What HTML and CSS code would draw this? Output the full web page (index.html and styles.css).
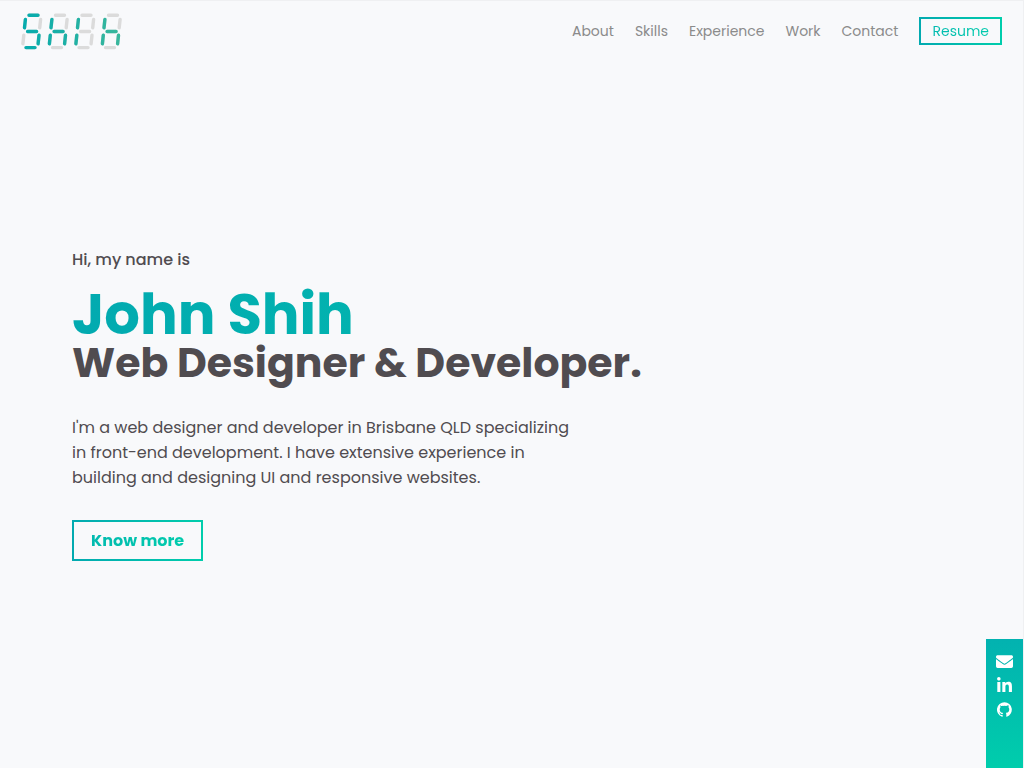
FILE: index.html
```html
<!DOCTYPE html>
<html lang="en">
<head>
<meta charset="utf-8">
<meta name="viewport" content="width=device-width, initial-scale=1">
<title>John Shih</title>
<link rel="stylesheet" href="styles.css">
</head>
<body>
<div class="page">
  <header class="header">
    <a class="logo" href="#home" aria-label="Shih">
      <svg width="101" height="37" viewBox="0 0 101 37" fill="none" stroke-width="3.4" stroke-linecap="round">
        <defs>
          <linearGradient id="logo-fill" gradientUnits="userSpaceOnUse" x1="0" y1="0" x2="101" y2="0">
            <stop offset="0" stop-color="#04abae"/>
            <stop offset="1" stop-color="#3ab79c"/>
          </linearGradient>
          <g id="digit">
            <path d="M8 2.3H17M4.4 6.4L3.5 14.8M19.6 6.4L18.7 14.8M6.6 18.5H15.6M2.8 22.2L1.9 30.8M18 22.2L17.1 30.8M5 34.6H14"/>
          </g>
        </defs>
        <g stroke="#dbdbdb">
          <use href="#digit"/><use href="#digit" x="26.5"/><use href="#digit" x="53"/><use href="#digit" x="79.5"/>
        </g>
        <g stroke="url(#logo-fill)">
          <path d="M8 2.3H17M4.4 6.4L3.5 14.8M6.6 18.5H15.6M18 22.2L17.1 30.8M5 34.6H14"/>
          <path d="M30.9 6.4L30 14.8M33.1 18.5H42.1M29.3 22.2L28.4 30.8M44.5 22.2L43.6 30.8"/>
          <path d="M57.4 6.4L56.5 14.8M55.8 22.2L54.9 30.8"/>
          <path d="M83.9 6.4L83 14.8M86.1 18.5H95.1M82.3 22.2L81.4 30.8M97.5 22.2L96.6 30.8"/>
        </g>
      </svg>
    </a>
    <nav class="nav" aria-label="Main">
      <a class="nav-link" href="#about">About</a>
      <a class="nav-link" href="#skills">Skills</a>
      <a class="nav-link" href="#experience">Experience</a>
      <a class="nav-link" href="#work">Work</a>
      <a class="nav-link" href="#contact">Contact</a>
      <a class="outline-link resume" href="#resume"><span class="gradient-text">Resume</span></a>
    </nav>
  </header>

  <main class="hero">
    <p class="greeting">Hi, my name is</p>
    <h1 class="name">John Shih</h1>
    <h2 class="role">Web Designer &amp; Developer.</h2>
    <p class="intro">I'm a web designer and developer in Brisbane QLD specializing<br>in front-end development. I have extensive experience in<br>building and designing UI and responsive websites.</p>
    <a class="outline-link more" href="#about"><span class="gradient-text">Know more</span></a>
  </main>
</div>

<aside class="social" aria-label="Social links">
  <a class="social-link" href="#email" aria-label="Email">
    <svg width="17" height="17" viewBox="0 0 512 512" fill="currentColor"><path d="M502.3 190.8c3.9-3.1 9.7-.2 9.7 4.7V400c0 26.5-21.500 48-48 48H48c-26.500 0-48-21.500-48-48V195.600c0-5 5.700-7.800 9.700-4.700 22.400 17.400 52.100 39.500 154.100 113.600 21.100 15.400 56.700 47.800 92.200 47.600 35.700.3 72-32.800 92.300-47.600 102-74.100 131.600-96.300 154-113.700zM256 320c23.200.4 56.600-29.200 73.400-41.400 132.700-96.300 142.800-104.700 173.400-128.700 5.800-4.500 9.200-11.500 9.200-18.900v-19c0-26.500-21.500-48-48-48H48c-26.500 0-48 21.500-48 48v19c0 7.400 3.400 14.300 9.200 18.900 30.600 23.900 40.700 32.400 173.400 128.700 16.800 12.200 50.200 41.800 73.400 41.400z"/></svg>
  </a>
  <a class="social-link" href="#linkedin" aria-label="LinkedIn">
    <svg width="15" height="17" viewBox="0 0 448 512" fill="currentColor"><path d="M100.3 448H7.400V148.900h92.900zM53.800 108.100C24.100 108.100 0 83.500 0 53.800a53.800 53.800 0 0 1 107.600 0c0 29.700-24.100 54.300-53.800 54.300zM447.900 448h-92.700V302.400c0-34.700-.7-79.200-48.300-79.200-48.300 0-55.700 37.700-55.700 76.700V448h-92.800V148.900h89.100v40.800h1.300c12.400-23.500 42.700-48.300 87.900-48.300 94 0 111.300 61.900 111.300 142.300V448z"/></svg>
  </a>
  <a class="social-link" href="#github" aria-label="GitHub">
    <svg width="15" height="15" viewBox="0 0 24 24" fill="currentColor"><path d="M12 .3a12 12 0 0 0-3.800 23.400c.6.1.8-.3.8-.6v-2.300c-3.300.7-4-1.400-4-1.400-.5-1.400-1.300-1.800-1.300-1.800-1.100-.7.1-.7.1-.7 1.200.1 1.800 1.200 1.800 1.200 1.100 1.900 2.900 1.300 3.500 1 .1-.8.4-1.300.8-1.600-2.700-.3-5.500-1.300-5.500-5.900 0-1.300.5-2.400 1.200-3.200-.1-.3-.5-1.500.1-3.200 0 0 1-.3 3.300 1.200a11.500 11.500 0 0 1 6 0c2.300-1.500 3.300-1.200 3.300-1.200.7 1.700.2 2.900.1 3.200.8.8 1.200 1.900 1.200 3.200 0 4.600-2.800 5.600-5.500 5.900.4.400.8 1.100.8 2.200v3.300c0 .3.200.7.8.6A12 12 0 0 0 12 .3"/></svg>
  </a>
</aside>
</body>
</html>
```

FILE: styles.css
```css
* {
  box-sizing: border-box;
}

body {
  margin: 0;
  background: #f8f9fb;
  color: #504c50;
  font-family: Poppins, Inter, "Open Sans", sans-serif;
}

a {
  color: inherit;
  text-decoration: none;
}

.page {
  display: flex;
  flex-direction: column;
  min-height: 100vh;
  border-top: 1px solid #eff0f2;
  border-right: 1px solid #eff0f2;
}

.header {
  display: flex;
  align-items: center;
  justify-content: space-between;
  padding: 12px 21px;
}

.logo svg {
  display: block;
}

.nav {
  display: flex;
  align-items: center;
  gap: 21px;
  padding-bottom: 2px;
  color: #8b8b8b;
  font-size: 14px;
  font-weight: 400;
  line-height: 24px;
}

.outline-link {
  border: 2px solid;
  border-image: linear-gradient(90deg, #02aab0, #00cdac) 1;
}

.gradient-text {
  background: linear-gradient(135deg, #02b8b0, #00cdac);
  background-clip: text;
  color: transparent;
}

.resume {
  padding: 0 11px;
}

.hero {
  display: flex;
  flex: 1;
  flex-direction: column;
  align-items: flex-start;
  justify-content: center;
  padding: 0 72px 22px;
}

.greeting {
  margin: 0 0 16px;
  font-size: 16px;
  font-weight: 500;
  line-height: 24px;
}

.name {
  margin: 0;
  background: linear-gradient(90deg, #02aab0, #01c3ad);
  background-clip: text;
  color: transparent;
  font-size: 56px;
  font-weight: 700;
  line-height: 54px;
  align-self: stretch;
}

.role {
  margin: 0 0 31px;
  font-size: 41px;
  font-weight: 700;
  line-height: 42px;
}

.intro {
  margin: 0 0 30px;
  font-size: 16px;
  font-weight: 400;
  line-height: 25px;
}

.more {
  padding: 6px 17px;
  font-size: 16px;
  font-weight: 700;
  line-height: 25px;
}

.social {
  position: fixed;
  right: 1px;
  bottom: 0;
  display: flex;
  flex-direction: column;
  align-items: center;
  gap: 7px;
  width: 37px;
  height: 129px;
  padding-top: 14px;
  background: linear-gradient(180deg, #02b2b0, #00cdac);
  color: #fff;
}

.social-link {
  display: flex;
  align-items: center;
  height: 17px;
}

.social-link svg {
  display: block;
}
```
